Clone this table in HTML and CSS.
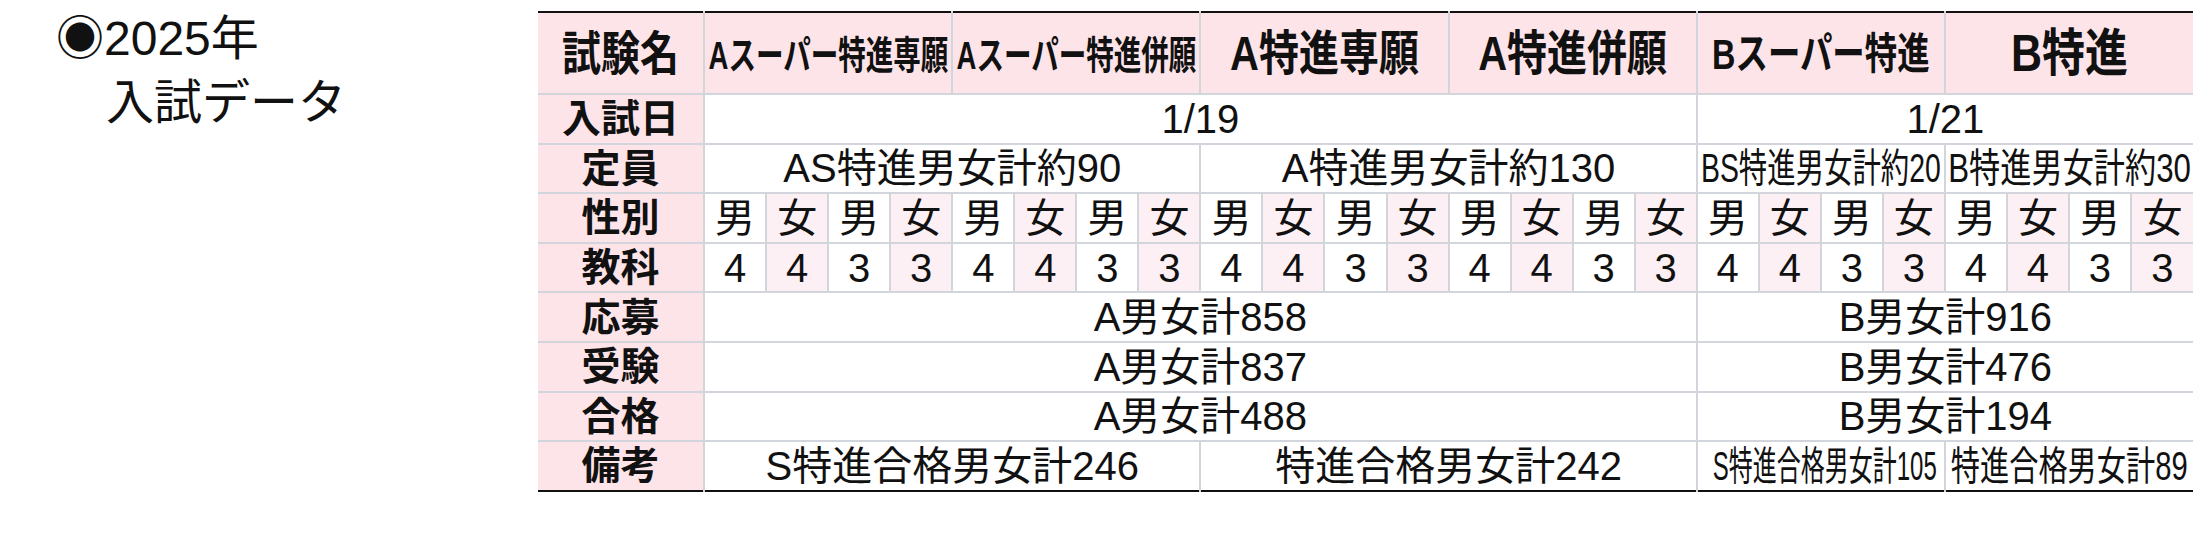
FILE: index.html
```html
<!DOCTYPE html>
<html lang="ja">
<head>
<meta charset="utf-8">
<title>2025年 入試データ</title>
<link rel="stylesheet" href="styles.css">
</head>
<body>
<div class="page">
  <div class="title">
    <div class="title-line1">◉2025年</div>
    <div class="title-line2">入試データ</div>
  </div>
  <table class="exam">
    <colgroup>
      <col class="col-label">
      <col span="24" class="col-sub">
    </colgroup>
    <tr class="row-head">
      <th class="label"><span class="tall">試験名</span></th>
      <th colspan="4" class="name"><span class="tx small">Aスーパー特進専願</span></th>
      <th colspan="4" class="name"><span class="tx small">Aスーパー特進併願</span></th>
      <th colspan="4" class="name"><span class="tx big">A特進専願</span></th>
      <th colspan="4" class="name"><span class="tx big">A特進併願</span></th>
      <th colspan="4" class="name"><span class="tx mid">Bスーパー特進</span></th>
      <th colspan="4" class="name"><span class="tx big bigger">B特進</span></th>
    </tr>
    <tr>
      <th class="label">入試日</th>
      <td colspan="16">1/19</td>
      <td colspan="8">1/21</td>
    </tr>
    <tr>
      <th class="label">定員</th>
      <td colspan="8">AS特進男女計約90</td>
      <td colspan="8">A特進男女計約130</td>
      <td colspan="4"><span class="sq sq71">BS特進男女計約20</span></td>
      <td colspan="4"><span class="sq sq78">B特進男女計約30</span></td>
    </tr>
    <tr class="row-sub">
      <th class="label">性別</th>
      <td>男</td><td class="f">女</td><td>男</td><td class="f">女</td>
      <td>男</td><td class="f">女</td><td>男</td><td class="f">女</td>
      <td>男</td><td class="f">女</td><td>男</td><td class="f">女</td>
      <td>男</td><td class="f">女</td><td>男</td><td class="f">女</td>
      <td>男</td><td class="f">女</td><td>男</td><td class="f">女</td>
      <td>男</td><td class="f">女</td><td>男</td><td class="f">女</td>
    </tr>
    <tr class="row-sub">
      <th class="label">教科</th>
      <td>4</td><td class="f">4</td><td>3</td><td class="f">3</td>
      <td>4</td><td class="f">4</td><td>3</td><td class="f">3</td>
      <td>4</td><td class="f">4</td><td>3</td><td class="f">3</td>
      <td>4</td><td class="f">4</td><td>3</td><td class="f">3</td>
      <td>4</td><td class="f">4</td><td>3</td><td class="f">3</td>
      <td>4</td><td class="f">4</td><td>3</td><td class="f">3</td>
    </tr>
    <tr>
      <th class="label">応募</th>
      <td colspan="16">A男女計858</td>
      <td colspan="8">B男女計916</td>
    </tr>
    <tr>
      <th class="label">受験</th>
      <td colspan="16">A男女計837</td>
      <td colspan="8">B男女計476</td>
    </tr>
    <tr>
      <th class="label">合格</th>
      <td colspan="16">A男女計488</td>
      <td colspan="8">B男女計194</td>
    </tr>
    <tr class="row-last">
      <th class="label">備考</th>
      <td colspan="8">S特進合格男女計246</td>
      <td colspan="8">特進合格男女計242</td>
      <td colspan="4"><span class="sq sq60">S特進合格男女計105</span></td>
      <td colspan="4"><span class="sq sq73">特進合格男女計89</span></td>
    </tr>
  </table>
</div>
</body>
</html>
```
FILE: styles.css
```css
* { box-sizing: border-box; }
html, body { margin: 0; padding: 0; background: #ffffff; }
body {
  font-family: "Liberation Sans", "Noto Sans CJK JP", sans-serif;
  color: #111111;
}
.page {
  display: flex;
  align-items: flex-start;
  padding-top: 11px;
}
.title {
  width: 538px;
  flex: none;
  padding-left: 56px;
  font-size: 48px;
  line-height: 64px;
  margin-top: -4px;
}
.title-line2 { padding-left: 50px; }

.exam {
  border-collapse: collapse;
  table-layout: fixed;
  width: 1655px;
  border-top: 2px solid #111;
  border-bottom: 2px solid #111;
}
.col-label { width: 166px; }
.col-sub { width: 62px; }

.exam th, .exam td {
  padding: 0;
  text-align: center;
  vertical-align: middle;
  border: 2px solid #d2d5db;
  white-space: nowrap;
  overflow: hidden;
  font-size: 40px;
  font-weight: 400;
  line-height: 1;
}
.exam tr { height: 49.6px; }
.exam .row-head { height: 82px; }
.exam tr > :first-child { border-left: none; }
.exam tr > :last-child { border-right: none; }
.exam .row-head > * { border-top: none; }
.exam .row-last > * { border-bottom: none; }

.exam th.label {
  background: #fde4e9;
  font-weight: 700;
  font-size: 39px;
  border-bottom: 2px dotted #c9c9c9;
}
.exam .row-last th.label { border-bottom: none; }
.exam th.name {
  background: #fde4e9;
  font-weight: 700;
}
.exam td.f { background: #fdf0f5; }

.tall, .tx, .sq {
  display: inline-block;
}
.tall { transform: scale(1, 1.2); }
.tx { margin: 0 -60px; }
.tx.small { font-size: 32px; transform: scale(0.86, 1.22); }
.tx.mid { font-size: 36px; transform: scale(0.9, 1.2); }
.tx.big { font-size: 40px; transform: scale(1, 1.2); }
.tx.bigger { font-size: 43px; }

.sq60 { transform: scaleX(0.6); margin: 0 -60px; }
.sq71 { transform: scaleX(0.71); margin: 0 -60px; }
.sq73 { transform: scaleX(0.73); margin: 0 -60px; }
.sq78 { transform: scaleX(0.78); margin: 0 -60px; }
```
